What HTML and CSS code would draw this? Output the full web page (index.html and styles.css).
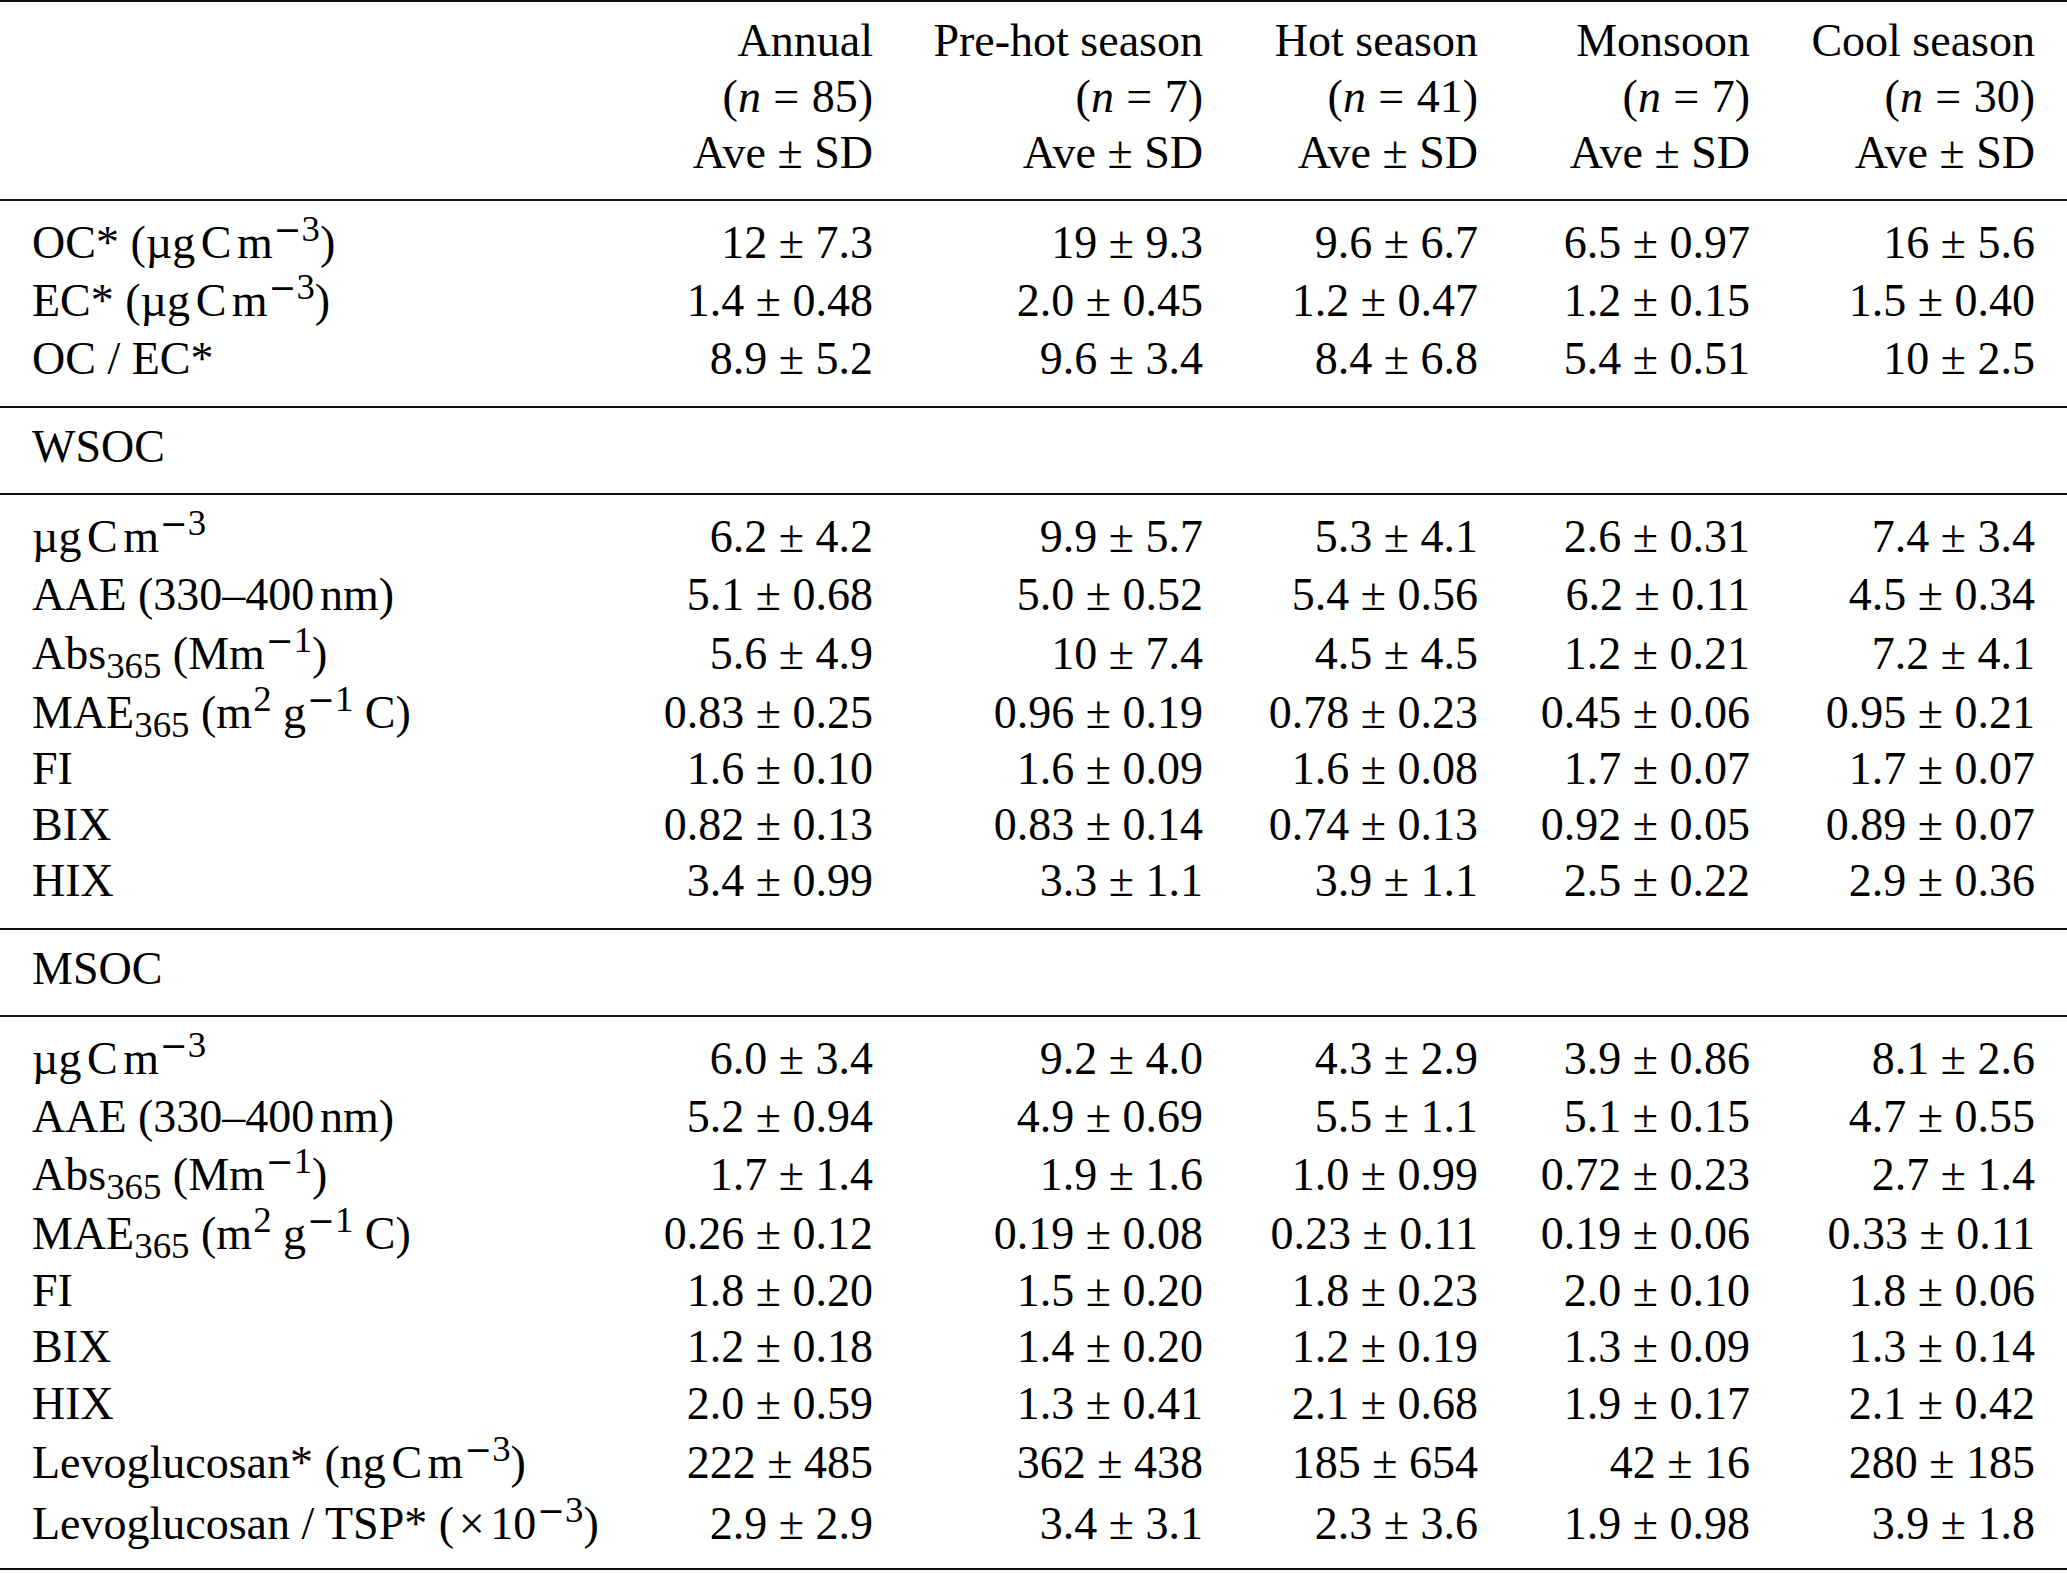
FILE: index.html
```html
<!DOCTYPE html>
<html lang="en">
<head>
<meta charset="utf-8">
<title>Table</title>
<link rel="stylesheet" href="styles.css">
</head>
<body>
<div class="table">
  <div class="head">
    <div class="row">
      <div class="lab"></div>
      <div class="num"><div>Annual</div><div>(<i>n</i><span class="eq">=</span>85)</div><div>Ave<span class="pm">±</span>SD</div></div>
      <div class="num"><div>Pre-hot season</div><div>(<i>n</i><span class="eq">=</span>7)</div><div>Ave<span class="pm">±</span>SD</div></div>
      <div class="num"><div>Hot season</div><div>(<i>n</i><span class="eq">=</span>41)</div><div>Ave<span class="pm">±</span>SD</div></div>
      <div class="num"><div>Monsoon</div><div>(<i>n</i><span class="eq">=</span>7)</div><div>Ave<span class="pm">±</span>SD</div></div>
      <div class="num"><div>Cool season</div><div>(<i>n</i><span class="eq">=</span>30)</div><div>Ave<span class="pm">±</span>SD</div></div>
    </div>
  </div>

  <div class="block">
    <div class="row">
      <div class="lab">OC* (µg<span class="t"></span>C<span class="t"></span>m<span class="sup"><span class="mi">−</span>3</span>)</div>
      <div class="num">12<span class="pm">±</span>7.3</div>
      <div class="num">19<span class="pm">±</span>9.3</div>
      <div class="num">9.6<span class="pm">±</span>6.7</div>
      <div class="num">6.5<span class="pm">±</span>0.97</div>
      <div class="num">16<span class="pm">±</span>5.6</div>
    </div>
    <div class="row p2">
      <div class="lab">EC* (µg<span class="t"></span>C<span class="t"></span>m<span class="sup"><span class="mi">−</span>3</span>)</div>
      <div class="num">1.4<span class="pm">±</span>0.48</div>
      <div class="num">2.0<span class="pm">±</span>0.45</div>
      <div class="num">1.2<span class="pm">±</span>0.47</div>
      <div class="num">1.2<span class="pm">±</span>0.15</div>
      <div class="num">1.5<span class="pm">±</span>0.40</div>
    </div>
    <div class="row p2">
      <div class="lab">OC / EC*</div>
      <div class="num">8.9<span class="pm">±</span>5.2</div>
      <div class="num">9.6<span class="pm">±</span>3.4</div>
      <div class="num">8.4<span class="pm">±</span>6.8</div>
      <div class="num">5.4<span class="pm">±</span>0.51</div>
      <div class="num">10<span class="pm">±</span>2.5</div>
    </div>
  </div>

  <div class="group">
    <div class="row"><div class="lab">WSOC</div></div>
  </div>

  <div class="block">
    <div class="row">
      <div class="lab">µg<span class="t"></span>C<span class="t"></span>m<span class="sup"><span class="mi">−</span>3</span></div>
      <div class="num">6.2<span class="pm">±</span>4.2</div>
      <div class="num">9.9<span class="pm">±</span>5.7</div>
      <div class="num">5.3<span class="pm">±</span>4.1</div>
      <div class="num">2.6<span class="pm">±</span>0.31</div>
      <div class="num">7.4<span class="pm">±</span>3.4</div>
    </div>
    <div class="row p2">
      <div class="lab">AAE (330–400<span class="t"></span>nm)</div>
      <div class="num">5.1<span class="pm">±</span>0.68</div>
      <div class="num">5.0<span class="pm">±</span>0.52</div>
      <div class="num">5.4<span class="pm">±</span>0.56</div>
      <div class="num">6.2<span class="pm">±</span>0.11</div>
      <div class="num">4.5<span class="pm">±</span>0.34</div>
    </div>
    <div class="row p3">
      <div class="lab">Abs<span class="sub">365</span> (Mm<span class="sup"><span class="mi">−</span>1</span>)</div>
      <div class="num">5.6<span class="pm">±</span>4.9</div>
      <div class="num">10<span class="pm">±</span>7.4</div>
      <div class="num">4.5<span class="pm">±</span>4.5</div>
      <div class="num">1.2<span class="pm">±</span>0.21</div>
      <div class="num">7.2<span class="pm">±</span>4.1</div>
    </div>
    <div class="row p3">
      <div class="lab">MAE<span class="sub">365</span> (m<span class="sup">2</span> g<span class="sup"><span class="mi">−</span>1</span> C)</div>
      <div class="num">0.83<span class="pm">±</span>0.25</div>
      <div class="num">0.96<span class="pm">±</span>0.19</div>
      <div class="num">0.78<span class="pm">±</span>0.23</div>
      <div class="num">0.45<span class="pm">±</span>0.06</div>
      <div class="num">0.95<span class="pm">±</span>0.21</div>
    </div>
    <div class="row">
      <div class="lab">FI</div>
      <div class="num">1.6<span class="pm">±</span>0.10</div>
      <div class="num">1.6<span class="pm">±</span>0.09</div>
      <div class="num">1.6<span class="pm">±</span>0.08</div>
      <div class="num">1.7<span class="pm">±</span>0.07</div>
      <div class="num">1.7<span class="pm">±</span>0.07</div>
    </div>
    <div class="row">
      <div class="lab">BIX</div>
      <div class="num">0.82<span class="pm">±</span>0.13</div>
      <div class="num">0.83<span class="pm">±</span>0.14</div>
      <div class="num">0.74<span class="pm">±</span>0.13</div>
      <div class="num">0.92<span class="pm">±</span>0.05</div>
      <div class="num">0.89<span class="pm">±</span>0.07</div>
    </div>
    <div class="row">
      <div class="lab">HIX</div>
      <div class="num">3.4<span class="pm">±</span>0.99</div>
      <div class="num">3.3<span class="pm">±</span>1.1</div>
      <div class="num">3.9<span class="pm">±</span>1.1</div>
      <div class="num">2.5<span class="pm">±</span>0.22</div>
      <div class="num">2.9<span class="pm">±</span>0.36</div>
    </div>
  </div>

  <div class="group">
    <div class="row"><div class="lab">MSOC</div></div>
  </div>

  <div class="block last">
    <div class="row">
      <div class="lab">µg<span class="t"></span>C<span class="t"></span>m<span class="sup"><span class="mi">−</span>3</span></div>
      <div class="num">6.0<span class="pm">±</span>3.4</div>
      <div class="num">9.2<span class="pm">±</span>4.0</div>
      <div class="num">4.3<span class="pm">±</span>2.9</div>
      <div class="num">3.9<span class="pm">±</span>0.86</div>
      <div class="num">8.1<span class="pm">±</span>2.6</div>
    </div>
    <div class="row p2">
      <div class="lab">AAE (330–400<span class="t"></span>nm)</div>
      <div class="num">5.2<span class="pm">±</span>0.94</div>
      <div class="num">4.9<span class="pm">±</span>0.69</div>
      <div class="num">5.5<span class="pm">±</span>1.1</div>
      <div class="num">5.1<span class="pm">±</span>0.15</div>
      <div class="num">4.7<span class="pm">±</span>0.55</div>
    </div>
    <div class="row p2">
      <div class="lab">Abs<span class="sub">365</span> (Mm<span class="sup"><span class="mi">−</span>1</span>)</div>
      <div class="num">1.7<span class="pm">±</span>1.4</div>
      <div class="num">1.9<span class="pm">±</span>1.6</div>
      <div class="num">1.0<span class="pm">±</span>0.99</div>
      <div class="num">0.72<span class="pm">±</span>0.23</div>
      <div class="num">2.7<span class="pm">±</span>1.4</div>
    </div>
    <div class="row p3">
      <div class="lab">MAE<span class="sub">365</span> (m<span class="sup">2</span> g<span class="sup"><span class="mi">−</span>1</span> C)</div>
      <div class="num">0.26<span class="pm">±</span>0.12</div>
      <div class="num">0.19<span class="pm">±</span>0.08</div>
      <div class="num">0.23<span class="pm">±</span>0.11</div>
      <div class="num">0.19<span class="pm">±</span>0.06</div>
      <div class="num">0.33<span class="pm">±</span>0.11</div>
    </div>
    <div class="row p1">
      <div class="lab">FI</div>
      <div class="num">1.8<span class="pm">±</span>0.20</div>
      <div class="num">1.5<span class="pm">±</span>0.20</div>
      <div class="num">1.8<span class="pm">±</span>0.23</div>
      <div class="num">2.0<span class="pm">±</span>0.10</div>
      <div class="num">1.8<span class="pm">±</span>0.06</div>
    </div>
    <div class="row">
      <div class="lab">BIX</div>
      <div class="num">1.2<span class="pm">±</span>0.18</div>
      <div class="num">1.4<span class="pm">±</span>0.20</div>
      <div class="num">1.2<span class="pm">±</span>0.19</div>
      <div class="num">1.3<span class="pm">±</span>0.09</div>
      <div class="num">1.3<span class="pm">±</span>0.14</div>
    </div>
    <div class="row p1">
      <div class="lab">HIX</div>
      <div class="num">2.0<span class="pm">±</span>0.59</div>
      <div class="num">1.3<span class="pm">±</span>0.41</div>
      <div class="num">2.1<span class="pm">±</span>0.68</div>
      <div class="num">1.9<span class="pm">±</span>0.17</div>
      <div class="num">2.1<span class="pm">±</span>0.42</div>
    </div>
    <div class="row p3">
      <div class="lab">Levoglucosan* (ng<span class="t"></span>C<span class="t"></span>m<span class="sup"><span class="mi">−</span>3</span>)</div>
      <div class="num">222<span class="pm">±</span>485</div>
      <div class="num">362<span class="pm">±</span>438</div>
      <div class="num">185<span class="pm">±</span>654</div>
      <div class="num">42<span class="pm">±</span>16</div>
      <div class="num">280<span class="pm">±</span>185</div>
    </div>
    <div class="row p5">
      <div class="lab">Levoglucosan / TSP* (<span class="times">×</span>10<span class="sup"><span class="mi">−</span>3</span>)</div>
      <div class="num">2.9<span class="pm">±</span>2.9</div>
      <div class="num">3.4<span class="pm">±</span>3.1</div>
      <div class="num">2.3<span class="pm">±</span>3.6</div>
      <div class="num">1.9<span class="pm">±</span>0.98</div>
      <div class="num">3.9<span class="pm">±</span>1.8</div>
    </div>
  </div>
</div>
</body>
</html>
```

FILE: styles.css
```css
html, body {
  margin: 0;
  padding: 0;
  background: #ffffff;
}

body {
  color: #000000;
  font-family: "Liberation Serif", "Times New Roman", serif;
  font-size: 46px;
}

.table {
  width: 2067px;
  border-top: 2px solid #111111;
}

.row {
  display: grid;
  grid-template-columns: 588px 253px 330px 275px 272px 285px;
  padding: 0 32px;
  line-height: 56px;
}

.p1 { padding-top: 1px; }
.p2 { padding-top: 2px; }
.p3 { padding-top: 3px; }
.p5 { padding-top: 5px; }

.lab {
  text-align: left;
  white-space: nowrap;
}

.num {
  text-align: right;
  white-space: nowrap;
}

.head {
  padding: 11px 0 18px;
  border-bottom: 2px solid #111111;
}

.block {
  padding: 14px 0 19px;
  border-bottom: 2px solid #111111;
}

.block.last {
  padding-bottom: 16px;
}

.group {
  padding: 11px 0 18px;
  border-bottom: 2px solid #111111;
}

.pm {
  margin: 0 0.25em;
}

.eq {
  margin: 0 0.27em;
}

.t {
  display: inline-block;
  width: 0.12em;
}

.times {
  margin: 0 0.12em 0 0.1em;
}

.sup {
  font-size: 0.8em;
  position: relative;
  top: -0.46em;
  line-height: 0;
  margin-left: 0.03em;
}

.sub {
  font-size: 0.8em;
  position: relative;
  top: 0.25em;
  line-height: 0;
}

.mi {
  font-family: "DejaVu Serif", "Liberation Serif", serif;
  font-size: 0.9em;
}
```
